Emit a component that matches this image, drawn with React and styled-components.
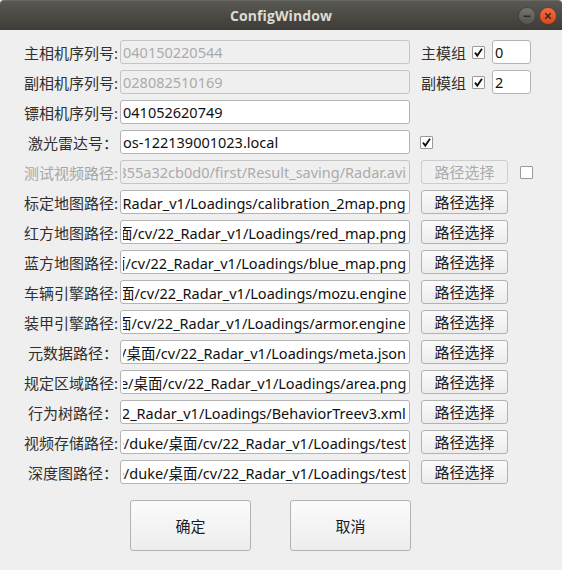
import React from 'react';
import styled, { createGlobalStyle } from 'styled-components';

const GlobalStyle = createGlobalStyle`
  html, body {
    margin: 0;
    padding: 0;
    background: #efefef;
  }
`;

const cjk = `"Noto Sans", "Noto Sans CJK SC", sans-serif`;

const Window = styled.div`
  width: 562px;
  height: 570px;
  background: #efefef;
  display: flex;
  flex-direction: column;
  font-family: ${cjk};
  overflow: hidden;
`;

const TitleBar = styled.div`
  height: 30px;
  flex-shrink: 0;
  display: grid;
  grid-template-columns: 1fr auto 1fr;
  align-items: center;
  background: linear-gradient(#5a5852, #3d3c38);
  border-top: 1px solid #6a6862;
  box-sizing: border-box;
  border-radius: 4px 4px 0 0;
`;

const Title = styled.div`
  grid-column: 2;
  font-family: "Open Sans", "DejaVu Sans", sans-serif;
  font-weight: 700;
  font-size: 14px;
  color: #dfdbd2;
  letter-spacing: 0.1px;
`;

const Controls = styled.div`
  grid-column: 3;
  justify-self: end;
  display: flex;
  gap: 3px;
  padding-right: 5px;
`;

const Form = styled.div`
  display: flex;
  flex-direction: column;
  gap: 6px;
  padding-top: 10px;
`;

const Row = styled.div`
  display: flex;
  align-items: center;
  height: 24px;
`;

const Label = styled.div`
  width: 118px;
  margin-right: 2px;
  text-align: right;
  font-size: 15px;
  white-space: nowrap;
  color: ${(p) => (p.$disabled ? '#a6a6a6' : '#303030')};
`;

const Edit = styled.input`
  width: ${(p) => p.$w || 290}px;
  height: 24px;
  margin: 0 0 0 ${(p) => p.$ml || 0}px;
  box-sizing: border-box;
  border: 1px solid ${(p) => (p.disabled ? '#c4c4c4' : '#b4b4b4')};
  border-radius: 3px;
  background: ${(p) => (p.disabled ? '#efefef' : '#ffffff')};
  color: ${(p) => (p.disabled ? '#ababab' : '#101010')};
  -webkit-text-fill-color: ${(p) => (p.disabled ? '#ababab' : '#101010')};
  opacity: 1;
  outline: none;
  padding: 0 3px 0 2px;
  font-family: ${cjk};
  font-size: 14.5px;
`;

const PathButton = styled.button`
  margin-left: 11px;
  width: 87px;
  height: 24px;
  box-sizing: border-box;
  padding: 0;
  border: 1px solid ${(p) => (p.disabled ? '#cdcdcd' : '#b2b2b2')};
  border-radius: 3px;
  background: ${(p) =>
    p.disabled ? '#f0f0f0' : 'linear-gradient(#fbfbfb, #ececec)'};
  color: ${(p) => (p.disabled ? '#ababab' : '#1c1c1c')};
  font-family: ${cjk};
  font-size: 15px;
  line-height: 22px;
`;

const Box = styled.span`
  display: inline-flex;
  align-items: center;
  justify-content: center;
  width: 13px;
  height: 13px;
  margin-left: ${(p) => p.$ml}px;
  box-sizing: border-box;
  border: 1px solid #9a9a9a;
  border-radius: 1px;
  background: #fff;
`;

const ModuleLabel = styled.span`
  margin-left: 11px;
  font-size: 15px;
  color: #303030;
`;

const ButtonBar = styled.div`
  display: flex;
  gap: 39px;
  padding-left: 130px;
  margin-top: 16px;
`;

const DialogButton = styled.button`
  width: 121px;
  height: 51px;
  box-sizing: border-box;
  border: 1px solid #b2b2b2;
  border-radius: 3px;
  background: linear-gradient(#fbfbfb, #ededed);
  color: #1c1c1c;
  font-family: ${cjk};
  font-size: 15px;
`;

// Qt line edits keep the cursor at the end, so long paths show their tail
const scrollToEnd = (el) => {
  if (el) el.scrollLeft = el.scrollWidth;
};

const LineEdit = ({ value, ...rest }) => (
  <Edit readOnly defaultValue={value} ref={scrollToEnd} {...rest} />
);

const CheckBox = ({ checked, ml }) => (
  <Box $ml={ml}>
    {checked && (
      <svg width="11" height="11" viewBox="0 0 11 11">
        <path d="M2 5.6 L4.3 8.6 L9 1.8" fill="none" stroke="#111" strokeWidth="1.8" />
      </svg>
    )}
  </Box>
);

const WinButton = ({ close }) => (
  <svg width="18" height="18" viewBox="0 0 18 18">
    <defs>
      <linearGradient id={close ? 'gc' : 'gm'} x1="0" y1="0" x2="0" y2="1">
        <stop offset="0" stopColor={close ? '#f36d43' : '#77756f'} />
        <stop offset="1" stopColor={close ? '#d9471a' : '#55534e'} />
      </linearGradient>
    </defs>
    <circle cx="9" cy="9" r="8.5" fill={`url(#${close ? 'gc' : 'gm'})`} stroke="#35342f" strokeWidth="0.6" />
    {close ? (
      <path d="M6.3 6.3 L11.7 11.7 M11.7 6.3 L6.3 11.7" stroke="#3a2a22" strokeWidth="1.6" />
    ) : (
      <path d="M5.5 9.3 H12.5" stroke="#2e2d2a" strokeWidth="1.6" />
    )}
  </svg>
);

const base = '/home/duke/桌面/cv/22_Radar_v1/Loadings/';

const rows = [
  { label: '主相机序列号:', value: '040150220544', disabled: true, extra: { module: '主模组', num: '0' } },
  { label: '副相机序列号:', value: '028082510169', disabled: true, extra: { module: '副模组', num: '2' } },
  { label: '镖相机序列号:', value: '041052620749' },
  { label: '激光雷达号：', value: 'os-122139001023.local', extra: { check: true } },
  {
    label: '测试视频路径:',
    value: '/home/duke/Videos/a7d355a32cb0d0/first/Result_saving/Radar.avi',
    disabled: true,
    labelDisabled: true,
    extra: { path: true, pathDisabled: true },
  },
  { label: '标定地图路径:', value: base + 'calibration_2map.png', extra: { path: true } },
  { label: '红方地图路径:', value: base + 'red_map.png', extra: { path: true } },
  { label: '蓝方地图路径:', value: base + 'blue_map.png', extra: { path: true } },
  { label: '车辆引擎路径:', value: base + 'mozu.engine', extra: { path: true } },
  { label: '装甲引擎路径:', value: base + 'armor.engine', extra: { path: true } },
  { label: '元数据路径：', value: base + 'meta.json', extra: { path: true } },
  { label: '规定区域路径:', value: base + 'area.png', extra: { path: true } },
  { label: '行为树路径：', value: base + 'BehaviorTreev3.xml', extra: { path: true } },
  { label: '视频存储路径:', value: base + 'test', extra: { path: true } },
  { label: '深度图路径：', value: base + 'test', extra: { path: true } },
];

const Extra = ({ extra }) => {
  if (!extra) return null;
  if (extra.module)
    return (
      <>
        <ModuleLabel>{extra.module}</ModuleLabel>
        <CheckBox checked ml={6} />
        <LineEdit value={extra.num} $w={39} $ml={7} />
      </>
    );
  if (extra.check) return <CheckBox checked ml={10} />;
  return (
    <>
      <PathButton disabled={extra.pathDisabled}>路径选择</PathButton>
      {extra.pathDisabled && <CheckBox ml={12} />}
    </>
  );
};

export default function App() {
  return (
    <>
      <GlobalStyle />
      <Window>
        <TitleBar>
          <Title>ConfigWindow</Title>
          <Controls>
            <WinButton />
            <WinButton close />
          </Controls>
        </TitleBar>
        <Form>
          {rows.map((r) => (
            <Row key={r.label}>
              <Label $disabled={r.labelDisabled}>{r.label}</Label>
              <LineEdit value={r.value} disabled={r.disabled} />
              <Extra extra={r.extra} />
            </Row>
          ))}
        </Form>
        <ButtonBar>
          <DialogButton>确定</DialogButton>
          <DialogButton>取消</DialogButton>
        </ButtonBar>
      </Window>
    </>
  );
}
